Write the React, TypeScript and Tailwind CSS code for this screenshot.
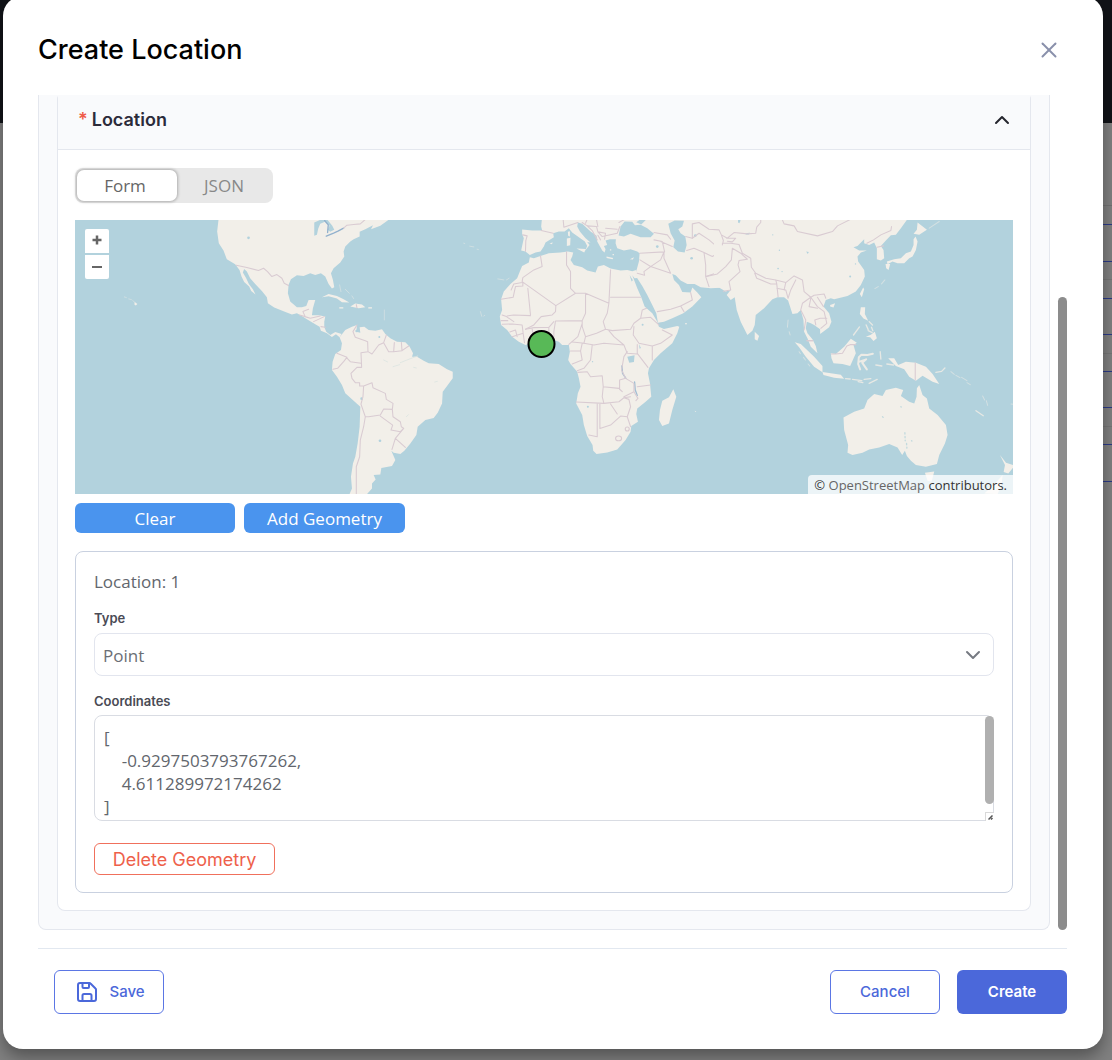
import { useState } from "react";
import { ChevronDown, ChevronUp, X } from "lucide-react";

const TABLE_LINES = [
  "top-[205px] bg-[#727272]",
  "top-[224px] bg-[#2b3a86]",
  "top-[261px] bg-[#2b3a86]",
  "top-[279px] bg-[#767676]",
  "top-[298px] bg-[#2b3a86]",
  "top-[334px] bg-[#2b3a86]",
  "top-[353px] bg-[#767676]",
  "top-[371px] bg-[#2b3a86]",
  "top-[407px] bg-[#2b3a86]",
  "top-[426px] bg-[#767676]",
  "top-[444px] bg-[#2b3a86]",
  "top-[481px] bg-[#2b3a86]",
];

function Backdrop() {
  return (
    <div className="absolute inset-0 overflow-hidden bg-[#808080]" aria-hidden="true">
      <div className="h-[123px] bg-[#111318]" />
      {TABLE_LINES.map((line) => (
        <div key={line} className={`absolute right-0 h-px w-[10px] ${line}`} />
      ))}
    </div>
  );
}

function WorldMap() {
  return (
    <svg
      className="block h-full w-full"
      viewBox="75 220 937 274"
      preserveAspectRatio="xMidYMid slice"
      role="img"
      aria-label="World map"
      strokeLinejoin="round"
      strokeLinecap="round"
    >
      <rect x="-2000" y="0" width="5000" height="800" fill="#b2d2dd" />

      {/* Americas */}
      <g transform="translate(300 210) scale(0.33333)" fill="#f2efe9">
        <path d="M-245 20 L-245 30 -249 65 -244 100 -230 122 -220 148 -195 163 -182 180 -176 200 -168 216 -153 230 -147 243 -134 254 -142 238 -154 222 -162 205 -172 188 -168 177 -160 185 -150 205 -135 222 -115 243 -100 262 -97 280 -78 293 -50 304 -25 314 -10 310 5 318 20 328 45 343 58 350 62 362 80 370 95 381 107 373 118 382 124 372 105 366 90 375 78 365 72 352 72 335 75 320 55 316 35 316 38 295 45 270 25 270 18 288 5 292 -10 292 -30 275 -37 250 -35 225 -28 208 -10 196 10 198 30 190 45 195 62 190 75 200 85 222 95 236 102 232 98 210 92 190 100 175 120 158 132 140 130 125 135 110 150 95 160 88 178 80 178 66 195 58 218 46 212 58 240 48 262 32 270 20Z" />
        <path d="M65 262L85 252 110 258 130 268 147 278 125 277 110 266 85 259ZM150 290L165 281 185 284 195 292 175 295ZM117 292h12v4h-12ZM204 292h11v4h-11Z" />
        <path d="M118 382L135 360 155 350 170 345 168 365 180 368 178 352 192 350 205 360 225 362 245 358 255 372 270 385 290 395 315 397 328 410 338 430 335 440 350 440 370 452 385 460 415 462 440 478 457 485 457 505 440 528 427 545 425 580 412 608 400 624 375 630 352 650 348 675 330 700 312 722 300 732 280 728 273 722 285 750 275 768 243 774 240 793 220 795 226 808 215 820 215 835 200 852 195 870 140 870 155 835 152 800 158 760 165 740 172 700 178 650 180 590 160 572 135 550 125 525 110 500 95 480 97 455 105 432 122 420 125 400Z" />
        <path d="M-527 261l6 2M-514 267l8 2M-502 272l6 5M118 225l4 20M135 238l12 12M155 258l5 8M252 300l0 30M490 100l3 1M508 109l12 2M530 118l4 1M592 207l18 3M618 210l8-5M540 305l4 14M550 318l3-2" stroke="#d3e0e2" strokeWidth="2.5" fill="none" />
        <path d="M-496 276l8 6-5 5-4-3Z" />
        <g fill="#b2d2dd">
          <path d="M42 38L60 30 80 28 96 48 102 60 90 66 82 60 88 48 74 36 60 42 54 56 50 75 42 78Z" />
          <circle cx="-155" cy="84" r="4" />
          <circle cx="169" cy="363" r="4" />
          <circle cx="237" cy="381" r="3" />
          <circle cx="239" cy="692" r="4" />
          <circle cx="184" cy="566" r="4" />
        </g>
        <path d="M73 32L84 45 82 68M78 79L100 70 113 64 130 55" fill="none" stroke="#92b1cd" strokeWidth="4" />
        <path d="M250 450l12 6M300 458l30-12 22-8M340 472l8 2M403 516l8-2M278 470l20-6M318 620l6-6" fill="none" stroke="#dce5e1" strokeWidth="2.5" />
        <g fill="none" stroke="#d9cbd2" strokeWidth="3.2">
          <path d="M-192 166L-160 173-125 182-110 175-98 185-85 200-70 194-55 205-48 220-35 227M130 55L140 46 160 44 180 42 196 28M-2 315L15 320 8 305 25 298M14 320L30 325M30 325L60 318M40 335L72 320M62 350L75 352" />
          <path d="M170 345L158 365 165 382 195 392 202 395 203 425 182 428 184 472 170 472 152 490 155 505 165 518 178 518 178 528 190 528 188 560 182 582 195 620 190 650 180 690 178 740 168 770 168 855M110 430L140 442 130 455 112 475 98 478M138 442L150 455 182 460M203 425L215 432 235 405 250 398 258 375M250 398L265 425 280 425 282 398M280 425L305 422 303 397M305 422L325 408M190 528L215 518 218 533 255 550 258 568 278 580 276 598 250 597 240 615 205 620 195 620M276 598L278 620 300 635 303 650 310 655 300 665 272 660 277 645 240 618M310 655L285 685 275 718M285 685L315 712M168 284L170 294" />
        </g>
      </g>

      {/* Africa, Europe and the Middle East */}
      <g transform="translate(490 210) scale(0.33333)" fill="#f2efe9">
        <path d="M118 142L130 145 150 138 175 130 210 128 232 125 248 128 245 140 240 150 250 165 275 172 290 182 315 188 322 170 340 165 360 176 390 182 410 180 425 184 437 180 440 204 432 205 425 196 440 235 452 262 462 290 485 310 500 335 505 350 520 357 560 348 566 350 560 370 545 400 510 430 490 450 475 475 472 490 478 520 482 560 465 575 440 595 437 612 442 635 422 648 420 665 405 690 380 718 350 727 318 732 308 722 306 705 290 678 280 645 275 615 257 580 262 550 270 530 265 505 260 485 240 462 233 450 238 425 235 405 215 405 205 395 190 390 150 385 120 400 105 405 85 395 65 380 50 360 32 345 28 320 35 300 32 268 40 245 60 222 80 205 88 185 95 168 115 158Z" />
        <path d="M155 20L152 50 155 62 125 62 95 59 95 72 100 85 92 122 105 125 118 135 135 128 150 125 160 110 165 98 190 82 188 70 205 65 222 65 235 55 245 68 265 82 283 95 290 108 284 122 297 105 290 96 300 98 285 85 268 65 260 50 262 38 275 42 300 65 318 78 320 95 335 122 342 128 345 118 340 108 350 105 345 92 358 88 376 88 375 100 380 115 400 122 420 118 440 125 447 130 445 155 438 180 435 192 440 205 455 228 470 255 485 285 497 310 502 338 520 335 545 325 578 310 605 290 632 262 620 248 605 233 600 248 575 246 565 225 550 210 545 192 555 196 570 212 590 222 612 222 630 232 660 235 700 233 700 20Z" />
        <path d="M258 116L286 117 281 128ZM229 86L240 84 239 106 229 108ZM232 66l6-2v16l-5-2ZM348 140l20 4-2 4-18-4ZM418 148l12-6-3 7ZM548 538L557 560 545 600 535 640 515 648 505 630 508 600 515 572 535 562ZM177 100l10-2-3 5ZM358 118l4 0v4h-4ZM366 132l4 0v4h-4ZM583 340h6v3h-6ZM598 608l5 2M612 602l5 2-3 2Z" />
        <g fill="#b2d2dd">
          <path d="M384 77L390 50 402 35 425 36 433 46 450 45 470 55 490 72 480 82 450 82 420 72 400 80ZM437 37L450 28 466 30 452 44Z" />
          <path d="M533 42L552 32 580 33 575 50 563 58 570 70 584 80 588 105 582 128 562 125 548 112 552 92 540 70Z" />
          <path d="M410 440L432 436 430 456 416 458ZM445 402l6 12-4 2ZM417 195l10 16-4 4Z" />
          <circle cx="456" cy="344" r="3" />
          <circle cx="292" cy="590" r="3" />
          <circle cx="500" cy="110" r="4" />
          <circle cx="603" cy="145" r="4" />
          <circle cx="614" cy="77" r="4" />
          <circle cx="306" cy="455" r="2" />
        </g>
        <path d="M394 468L396 490 406 505M432 516L434 540 440 556" fill="none" stroke="#a0bdd3" strokeWidth="4" />
        <g fill="none" stroke="#d9cbd2" strokeWidth="3.2">
          <path d="M150 138L155 170 130 180 97 203 95 215 196 287 255 250 285 250 355 280 360 180M97 218L97 228 75 230 68 262 32 268M95 218L70 222 62 240M120 315L112 235M50 318L70 315 120 317M196 287L195 305 185 315 152 320 130 345 105 358M228 126L228 165 240 185 240 235 255 250M360 262L450 262M285 250L285 310 275 332 195 333 190 365 190 390M355 280L350 310 338 335 345 358 318 370 285 380 275 350 275 332M275 340L262 380 235 403M345 358L365 362 420 358 430 340 450 325 455 300 468 295M285 380L280 400 310 405 340 400 400 405 370 380 355 362M450 325L480 322 505 345M430 350L428 375 445 400 485 408 510 400 545 375 515 360M485 408L485 450M440 404L440 430 472 472M400 405L410 430 440 432" />
          <path d="M305 405L300 450 280 475 260 482M262 487L290 485 300 500 335 497 338 530 385 535 395 545 387 538 387 510 405 505 393 480 400 440 410 425M240 423L270 423 275 400M270 423L275 450 245 462M257 576L340 580 335 560 338 530M340 580L385 575 400 563 420 560M320 582L320 680 295 675M328 582L328 655 360 645 390 618 410 620 420 650M360 582L380 612M410 620L420 590 415 568 400 563M405 505L430 520 430 545 400 560M440 530L480 525M430 545L442 565 436 572M35 315L48 320 70 335M32 332L52 332M35 343L65 342M65 342L95 345 98 370 65 380M98 370L102 398M105 358L130 353 175 352 190 335M175 352L175 368M125 357L127 370M58 366L75 360 80 380M245 396L282 400" />
          <ellipse cx="384" cy="685" rx="9" ry="7" />
          <circle cx="410" cy="657" r="6" />
          <path d="M447 130L520 126 510 150 480 170 448 150M520 126L520 145 540 190 480 170 460 185 462 196 440 190M500 305L540 298 570 288 580 305M570 288L605 270 600 248M490 90L515 95 522 126M510 95L545 110M490 68L530 75 540 88M588 122L610 115 640 128 645 165 645 200 655 230M640 128L665 140 690 125 712 115M645 200L682 188 700 165M275 38L290 48 318 50 322 66 345 70 342 88M290 48L305 62 320 90M318 30L322 50M322 66L335 80 380 70 388 50M345 55L380 58M322 76L330 90M218 30L220 52 262 38M97 75L110 78 106 92 105 124M152 62L188 70M290 28L285 40M385 38L400 30M585 80L605 85 625 70 655 90 690 120" />
        </g>
      </g>

      {/* Asia */}
      <g transform="translate(650 210) scale(0.33333)" fill="#f2efe9">
        <path d="M190 20L190 233 205 233 225 245 240 240 228 255 240 270 252 262 258 300 270 335 290 375 305 362 312 345 315 315 340 295 365 268 380 262 400 262 412 272 425 312 440 310 450 300 458 330 460 365 470 385 480 410 500 430 495 408 485 388 470 370 465 355 468 335 480 340 490 345 508 358 508 372 535 352 542 335 535 310 518 290 525 270 540 265 550 268 590 258 615 245 630 225 642 200 640 180 622 155 620 140 630 128 648 122 625 122 608 112 620 108 640 88 640 100 655 105 670 98 678 115 678 148 690 152 700 145 698 120 690 108 705 92 720 76 735 75 750 55 768 30 772 20Z" />
        <path d="M312 365L325 378 320 392 312 388ZM432 397L450 402 490 440 515 468 515 487 490 470 465 440 445 412Z" />
        <path d="M412 330l-2 22M445 425l4 6M458 442l6 8M472 462l5 6M415 365l3 10" stroke="#d3e0e2" strokeWidth="3" fill="none" />
        <g fill="#b2d2dd">
          <path d="M262 28l8 4-4 8-4-2ZM284 70l14-1-3 5-10 0ZM466 125l8 1-3 6Z" />
          <circle cx="366" cy="75" r="2" />
          <circle cx="386" cy="121" r="2" />
          <circle cx="382" cy="176" r="2.5" />
          <circle cx="394" cy="185" r="2" />
          <circle cx="598" cy="200" r="3" />
          <circle cx="614" cy="162" r="2" />
        </g>
        <g fill="none" stroke="#d9cbd2" strokeWidth="3.2">
          <path d="M125 85L125 42 145 38 175 58 205 60 212 75 230 85 250 68 290 72 315 70 318 52 330 38 330 28M215 100L240 100 265 104 275 130 300 145 302 172 315 190 345 205 375 210 405 218 430 198 455 210 460 245 480 262 490 256 520 252 525 265M228 85L255 85 245 96 230 94M212 75L218 92 215 105M245 115L242 150 225 170 200 192 168 200M245 115L270 130 290 148 265 152 262 165 268 185 235 215 240 240 218 244M312 190L318 205 360 222 378 222 375 210M378 222L382 260M378 235L405 240 412 265M405 218L400 240M412 265L420 240 435 210M480 262L455 280 450 300 465 330 460 360M480 262L500 290 520 305 528 340 510 355M528 325L508 325 492 330 495 345M480 265L475 290 500 295M500 262L518 290" />
          <path d="M394 28L400 42 430 48 440 65 500 78 545 65 560 48 600 28M648 100L668 90 690 75 720 62 722 50M678 112L698 108M470 392L486 392" />
        </g>
      </g>

      {/* Pacific and Oceania */}
      <g transform="translate(800 210) scale(0.33333)" fill="#f2efe9">
        <path d="M344 80L350 95 345 120 335 140 325 145 310 160 290 160 275 155 260 163 258 155 280 148 300 145 315 130 330 125 338 105 338 88ZM254 162L268 162 263 180 256 175ZM350 38L378 60 355 75 338 72 348 60ZM187 233L190 238 183 262 177 252ZM88 285L103 280 98 293 88 290ZM180 292L193 292 192 312 202 332 188 326 177 312ZM195 380L210 374 222 365 228 385 218 393 208 382ZM90 430L105 432 130 410 150 386 168 398 158 405 165 430 148 468 125 462 98 460 92 445ZM65 486L90 490 120 494 130 506 100 503 68 495ZM262 445L280 445 292 465 315 455 345 458 375 470 395 492 415 522 395 515 365 497 345 512 325 500 310 478 285 468ZM128 622L160 605 190 595 200 570 220 552 245 558 255 540 285 533 307 540 300 558 325 575 340 580 347 560 348 535 355 525 365 555 378 565 385 595 410 615 435 645 440 675 432 700 415 735 408 762 375 770 345 765 330 752 318 738 312 722 304 735 290 712 265 702 235 712 205 718 185 728 155 735 140 728 142 705 130 660ZM372 788L400 784 392 815 380 812ZM597 735L615 758 637 765 637 772 622 790 608 786 612 765ZM605 795L580 822 550 850 590 852 602 822Z" />
        <path d="M174 442L182 434 200 435 216 431M174 442L172 462 178 478M176 455L196 448 184 458 198 478" fill="none" stroke="#ecebe6" strokeWidth="6" />
        <path d="M205 335l10 10M196 345l6 14M212 352l4 10M202 362l12 6M158 375l18-24M238 425l2 22M225 465l18 3M258 462l20 3M134 506l14 1M155 508l28 4M190 508l20-2M205 520l24-12M172 515l14 3M405 487L422 484 432 474M525 602l22 15" fill="none" stroke="#e6e8e4" strokeWidth="4" />
        <path d="M450 485l10 8M465 496l12 7M482 502l16 10M498 518l10 6M545 558l6 12M556 572l4 14M630 582l8 1M385 55L415 35M242 222l10-12M222 236l10-6M180 240" fill="none" stroke="#d3e0e2" strokeWidth="3" />
        <g fill="none" stroke="#d9cbd2" strokeWidth="3.2">
          <path d="M343 458L343 510M92 432L105 432 125 430 138 408 148 404 165 404M18 392L36 392" />
        </g>
        <path d="M312 668l1 24M317 700l1 14M245 620l2 2M300 590l1 1M332 692l1 1" fill="none" stroke="#c3dade" strokeWidth="4" strokeDasharray="4 7" />
      </g>

      <circle cx="541" cy="344" r="13" fill="#58b957" stroke="#000" strokeWidth="2" />
    </svg>
  );
}

function SaveIcon() {
  return (
    <svg
      className="size-6"
      viewBox="0 0 24 24"
      fill="none"
      stroke="currentColor"
      strokeWidth="2"
      strokeLinecap="round"
      strokeLinejoin="round"
      aria-hidden="true"
    >
      <path d="M5 3H14.4a1.6 1.6 0 0 1 1.1.5L20.5 8.5a1.6 1.6 0 0 1 .5 1.1V19a2 2 0 0 1-2 2H5a2 2 0 0 1-2-2V5a2 2 0 0 1 2-2Z" />
      <path d="M7.500 3V7a1 1 0 0 0 1 1H13a1 1 0 0 0 1-1V3" />
      <path d="M7.500 21V15.500a1.500 1.500 0 0 1 1.500-1.500H15a1.500 1.500 0 0 1 1.500 1.500V21" />
    </svg>
  );
}

export default function App() {
  const [mode, setMode] = useState("form");
  const [coordinates, setCoordinates] = useState(
    "[\n    -0.9297503793767262,\n    4.611289972174262\n]",
  );

  return (
    <div className="relative overflow-hidden pb-[11px] pl-[3px] pr-[9px] font-['Inter',sans-serif]">
      <Backdrop />
      <main
        role="dialog"
        aria-labelledby="dialog-title"
        className="relative -mt-1 rounded-[20px] bg-white pb-[35px] pl-[35px] pr-[36px] pt-1 shadow-[0_8px_16px_rgba(0,0,0,0.35)]"
      >
        <header className="flex h-[95px] items-center justify-between pt-1">
          <h1 id="dialog-title" className="text-[27px] font-medium leading-8 text-black">
            Create Location
          </h1>
          <button type="button" aria-label="Close" className="mr-[5px] text-[#8990ab]">
            <X className="size-[26px]" strokeWidth={1.8} />
          </button>
        </header>

        <div className="flex justify-between gap-2">
          <div className="min-w-0 flex-1 rounded-b-lg border-x border-b border-[#e4e7ee] bg-[#f9fafc] px-[18px] pb-[18px]">
            <section className="rounded-lg rounded-t-[4px] border-x border-b border-[#e4e7ee] bg-white">
              <h2>
                <button
                  type="button"
                  aria-expanded="true"
                  className="flex h-[55px] w-full items-center justify-between border-b border-[#e4e7ee] bg-[#f9fafc] pb-[5px] pl-5 pr-4 text-left"
                >
                  <span className="flex gap-1 text-[18px] font-semibold leading-6 text-[#2b2b3a]">
                    <span className="text-[#ef5b48]">*</span>Location
                  </span>
                  <ChevronUp className="size-6 text-[#25262e]" strokeWidth={2} />
                </button>
              </h2>

              <div className="px-[17px] pb-[17px] pt-[18px]">
                <div className="flex h-[35px] w-[198px] rounded-lg bg-[#e8e8e8] p-0.5 font-['Open_Sans',sans-serif] text-[17px]">
                  <button
                    type="button"
                    aria-pressed={mode === "form"}
                    onClick={() => setMode("form")}
                    className="w-[100px] rounded-[7px] bg-white pr-1 text-[#666] shadow-[0_0_3px_1px_rgba(0,0,0,0.25)]"
                  >
                    Form
                  </button>
                  <button
                    type="button"
                    aria-pressed={mode === "json"}
                    onClick={() => setMode("json")}
                    className="flex-1 text-[#888]"
                  >
                    JSON
                  </button>
                </div>

                <div className="relative mt-[17px] h-[274px] overflow-hidden">
                  <WorldMap />
                  <div className="absolute left-[10px] top-[9px] flex flex-col gap-0.5 text-[#666]">
                    <button
                      type="button"
                      aria-label="Zoom in"
                      className="flex h-6 w-6 items-center justify-center rounded-t-xs bg-white pb-0.5"
                    >
                      <svg className="size-[10px]" viewBox="0 0 10 10" stroke="currentColor" strokeWidth="2.500">
                        <path d="M0.500 5H9.500M5 0.500V9.500" />
                      </svg>
                    </button>
                    <button
                      type="button"
                      aria-label="Zoom out"
                      className="flex h-6 w-6 items-center justify-center rounded-b-xs bg-white"
                    >
                      <svg className="size-[10px]" viewBox="0 0 10 10" stroke="currentColor" strokeWidth="2">
                        <path d="M0 5H10" />
                      </svg>
                    </button>
                  </div>
                  <p className="absolute bottom-0 right-0 rounded-tl bg-white/75 px-[6px] pt-px font-['Open_Sans',sans-serif] text-[13px] leading-[18px] text-[#333]">
                    ©{" "}
                    <a href="#osm" className="text-[#666]">
                      OpenStreetMap
                    </a>{" "}
                    contributors.
                  </p>
                </div>

                <div className="mt-[9px] flex gap-[9px] font-['Open_Sans',sans-serif] text-[17px] text-white">
                  <button type="button" className="h-[30px] w-[160px] rounded-md bg-[#4a94ee] pt-0.5">
                    Clear
                  </button>
                  <button type="button" className="h-[30px] w-[161px] rounded-md bg-[#4a94ee] pt-0.5">
                    Add Geometry
                  </button>
                </div>

                <div className="mt-[18px] rounded-lg border border-[#c9d1e0] px-[18px] pb-[17px] pt-[18px]">
                  <h3 className="font-['Open_Sans',sans-serif] text-[17px] leading-6 text-[#62666d]">
                    Location: 1
                  </h3>

                  <label htmlFor="type" className="mt-4 block text-[13px] font-semibold leading-4 text-[#4a4b55]">
                    Type
                  </label>
                  <div className="relative mt-[7px]">
                    <select
                      id="type"
                      className="block h-[43px] w-full appearance-none rounded-lg border border-[#e2e5ee] bg-white px-2 pt-0.5 font-['Open_Sans',sans-serif] text-[17px] text-[#6b6e75]"
                    >
                      <option>Point</option>
                    </select>
                    <ChevronDown
                      className="pointer-events-none absolute right-[9px] top-[10px] size-6 text-[#767a82]"
                      strokeWidth={2}
                    />
                  </div>

                  <label
                    htmlFor="coordinates"
                    className="mt-[17px] block text-[13px] font-semibold leading-4 text-[#4a4b55]"
                  >
                    Coordinates
                  </label>
                  <div className="relative mt-[6px]">
                    <textarea
                      id="coordinates"
                      value={coordinates}
                      onChange={(event) => setCoordinates(event.target.value)}
                      className="block h-[106px] w-full resize-none overflow-hidden rounded-lg border border-[#d9dce3] bg-white px-[9px] pt-[10px] font-['Open_Sans',sans-serif] text-[17px] leading-[23px] text-[#62666d]"
                    />
                    <div className="absolute right-0 top-px h-[88px] w-[9px] rounded-full bg-[#b0b0b0]" />
                    <div className="absolute bottom-0 right-0 flex size-[9px] items-center justify-center border-l border-t border-[#d9d9d9] bg-white">
                      <svg className="size-[5px]" viewBox="0 0 5 5" stroke="#555" strokeWidth="1.500">
                        <path d="M0.500 4.500L4.500 0.500M3 4.500L4.500 3" />
                      </svg>
                    </div>
                  </div>

                  <button
                    type="button"
                    className="mt-[22px] block h-8 w-[181px] rounded-md border border-[#f0705c] text-[18px] text-[#ee604a]"
                  >
                    Delete Geometry
                  </button>
                </div>
              </div>
            </section>
          </div>
          <div className="mt-[202px] w-[9px] rounded-full bg-[#8c8c8c]" />
        </div>

        <footer className="mt-[18px] flex justify-between border-t border-[#e2e8f0] pl-4 pt-[21px] text-[15px] font-medium">
          <button
            type="button"
            className="flex h-11 w-[110px] items-center justify-center gap-[10px] rounded-md border border-[#5b76e4] pl-0.5 text-[#4b68da]"
          >
            <SaveIcon />
            Save
          </button>
          <div className="flex gap-[17px]">
            <button type="button" className="h-11 w-[110px] rounded-md border border-[#5b76e4] text-[#4b68da]">
              Cancel
            </button>
            <button type="button" className="h-11 w-[110px] rounded-md bg-[#4b68da] font-semibold text-white">
              Create
            </button>
          </div>
        </footer>
      </main>
    </div>
  );
}
